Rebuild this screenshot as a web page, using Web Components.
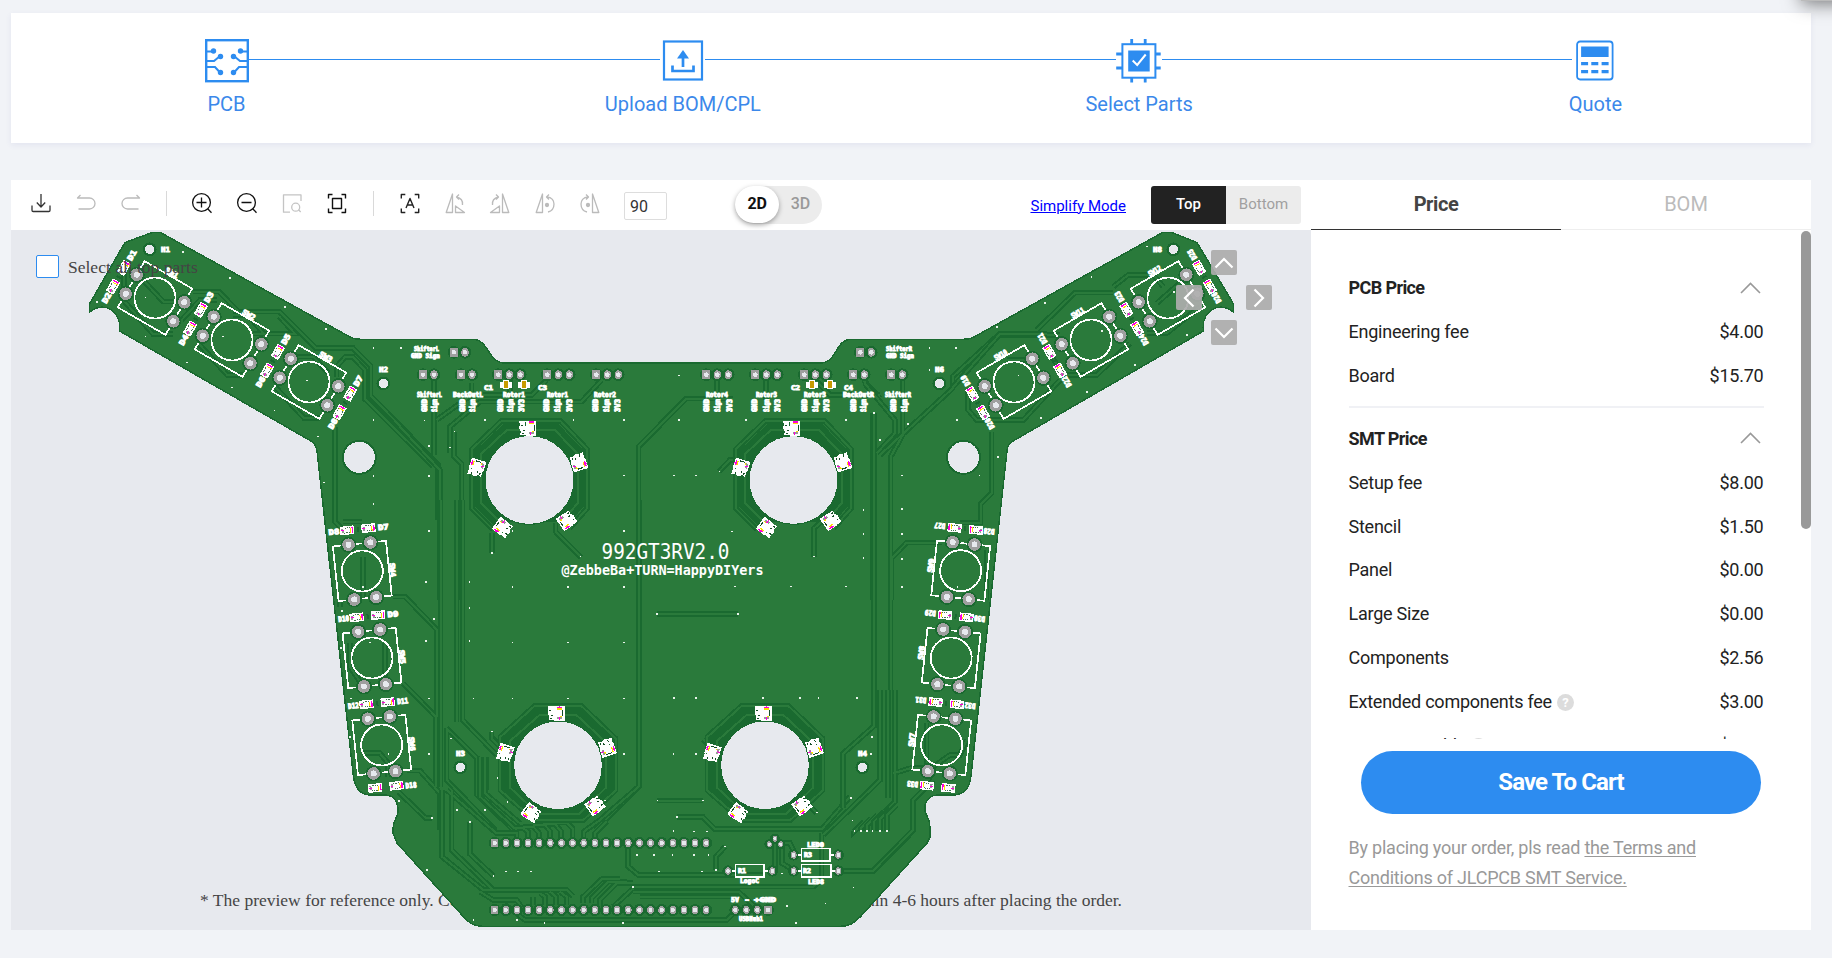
<!DOCTYPE html>
<html lang="en">
<head>
<meta charset="utf-8">
<title>PCB assembly order</title>
<style>
html,body{margin:0;padding:0;height:100%;overflow:hidden;background:#f1f3f7;font-family:Roboto,"Liberation Sans",sans-serif}
</style>
</head>
<body>
<order-page></order-page>
<script>
const define = (name, css, html, setup) => {
  const t = document.createElement('template');
  t.innerHTML = `<style>*{box-sizing:border-box}${css}</style>${html}`;
  customElements.define(name, class extends HTMLElement {
    constructor(){ super(); this.attachShadow({mode:'open'}).append(t.content.cloneNode(true)); }
    connectedCallback(){ if(setup) setup(this, this.shadowRoot); }
  });
};

/* ---------- progress steps ---------- */
const B = '#2d8cf0';
const stepIcons = {
  pcb:`<g fill="none" stroke="${B}" stroke-width="2.4"><rect x="1.2" y="1.2" width="41.6" height="41"/><path stroke-width="2" d="M2 12.500H7M2 22H9L14.500 17.500M2 28H10L15 33.500M42 12.500H37M42 22H35L29.500 17.500M42 28H34L29 33.500"/></g><g fill="${B}"><circle cx="8.500" cy="12" r="2.700"/><circle cx="15.500" cy="17.500" r="2.700"/><circle cx="15.500" cy="33.500" r="2.700"/><circle cx="35.500" cy="12" r="2.700"/><circle cx="28.500" cy="17.500" r="2.700"/><circle cx="28.500" cy="33.500" r="2.700"/></g>`,
  up:`<g fill="none" stroke="${B}"><rect x="3" y="2.500" width="38" height="38" stroke-width="2.200"/><path stroke-width="2.700" d="M11.500 26.500V32H32.500V26.500M22 28V17"/></g><path fill="${B}" d="M22 11L28 19.500H16Z"/>`,
  chip:`<g stroke="${B}" fill="none" transform="translate(-.8 0)"><rect x="6.200" y="5.200" width="33" height="33.500" stroke-width="2"/><path stroke-width="2.800" d="M15.500 0V6M29 0V6M15.500 38V43.500M29 38V43.500M0 15H6M0 29H6M39 15H44.500M39 29H44.500"/></g><g transform="translate(-.8 0)"><path fill="${B}" d="M12 11.500H33.500V32.500H12Z"/><path fill="none" stroke="#fff" stroke-width="2" d="M16.500 21.500L21 26L29.500 15.500"/></g>`,
  calc:`<g transform="translate(-.4 0)"><rect x="4.500" y="2.500" width="35.500" height="38" rx="3" fill="none" stroke="${B}" stroke-width="1.800"/><g fill="${B}"><path d="M8.500 7.500H36V18H8.500Z"/><path d="M8.500 23H15.500V26.200H8.500ZM18.700 23H25.700V26.200H18.700ZM29 23H36V26.200H29ZM8.500 31H15.500V34.200H8.500ZM18.700 31H25.700V34.200H18.700ZM29 31H36V34.200H29Z"/></g></g>`
};
define('step-item', `:host{display:flex;flex-direction:column;align-items:center;width:44px;flex:none}
svg{display:block;width:44px;height:44px;overflow:visible}.t{font-size:20px;line-height:24px;margin-top:9px;color:#3b88ea;white-space:nowrap}`,
`<svg viewBox="0 0 44 44"></svg><div class="t"><slot></slot></div>`,
(h,r)=>{r.querySelector('svg').innerHTML=stepIcons[h.getAttribute('icon')];});
define('step-bar', `:host{display:flex;width:1800px;height:130px;background:#fff;padding:25.500px 193.500px 0 193.500px;box-shadow:0 2px 6px rgba(60,60,150,.08)}
i{flex:1;height:1px;background:#2d8cf0;margin:20.500px 1px 0 .5px}`,
`<step-item icon="pcb">PCB</step-item><i></i><step-item icon="up">Upload BOM/CPL</step-item><i></i><step-item icon="chip">Select Parts</step-item><i></i><step-item icon="calc">Quote</step-item>`);

/* ---------- toolbar ---------- */
const glyphs = {
  down:`<path d="M10 1V14M5.800 9.500L10 14L14.200 9.500M1 12.500V17.300Q1 18.500 2.200 18.500H17.800Q19 18.500 19 17.300V12.500" stroke="#333"/>`,
  undo:`<path d="M4.500 2L1.500 5H13.500A5.500 5.500 0 0 1 13.500 16H2.500" stroke="#bbb"/>`,
  redo:`<path d="M15.500 2L18.500 5H6.500A5.500 5.500 0 0 0 6.500 16H17.500" stroke="#bbb"/>`,
  zin:`<circle cx="9.500" cy="9.500" r="8.900" stroke="#111"/><path d="M9.500 4.500V14.500M4.500 9.500H14.500M15.700 15.700L19.500 19.700" stroke="#111"/>`,
  zout:`<circle cx="9.500" cy="9.500" r="8.900" stroke="#111"/><path d="M4.500 9.500H14.500M15.700 15.700L19.500 19.700" stroke="#111"/>`,
  area:`<path d="M8 19.200H1.500V1.800H19V8M18.700 19L16.500 16.800" stroke="#c4c4c4"/><circle cx="13.700" cy="14.200" r="4" stroke="#c4c4c4"/>`,
  fit:`<path d="M1.500 5.500V1.500H5.500M14.500 1.500H18.500V5.500M18.500 15.500V19.500H14.500M5.500 19.500H1.500V15.500M5.500 5.500H14.500V15.500H5.500Z" stroke="#111" stroke-width="1.400"/>`,
  auto:`<path d="M1.300 5.500V1.500H5.300M14.700 1.500H18.700V5.500M18.700 15.500V19.500H14.700M5.300 19.500H1.300V15.500M6 15L10 5.500L14 15M7.300 12H12.700" stroke="#222" stroke-width="1.400"/>`,
  rl:`<path d="M7.500 1V19.500H1.200ZM10.500 13V19.500H19.500ZM17.500 12C18 8 16 5 11.500 4M14 1.500L11.500 4L14 6.500" stroke="#bbb"/>`,
  rr:`<path d="M12.500 1V19.500H18.800ZM9.500 13V19.500H.5ZM2.500 12C2 8 4 5 8.500 4M6 1.500L8.500 4L6 6.500" stroke="#bbb"/>`,
  ml:`<path d="M7.500 1V19.500H1.200ZM12 4C17 4 19 8 19 11C19 15 17 18 13 19M14 1.500L11.500 4L14 6.500" stroke="#bbb"/><circle cx="12" cy="12" r="1.500" fill="#bbb" stroke="#bbb"/>`,
  mr:`<path d="M12.500 1V19.500H18.800ZM8 4C3 4 1 8 1 11C1 15 3 18 7 19M6 1.500L8.500 4L6 6.500" stroke="#bbb"/><circle cx="8" cy="12" r="1.500" fill="#bbb" stroke="#bbb"/>`
};
define('tool-icon', `:host{display:block;width:20px;height:20px;flex:none}svg{display:block;overflow:visible}`,
`<svg width="20" height="20" viewBox="0 0 20 20" fill="none" stroke-width="1.300" stroke-linejoin="round"></svg>`,
(h,r)=>{r.querySelector('svg').innerHTML=glyphs[h.getAttribute('name')];});
define('tool-bar', `:host{display:flex;align-items:center;width:1300px;height:50px;background:#fff;position:relative}
.g{display:flex;gap:25px;padding-left:20px;align-items:center;margin-top:-4px}.g i{width:1px;height:25px;background:#d9d9d9}
.in{width:43px;height:28px;border:1px solid #ddd;border-radius:2px;font-size:16px;line-height:28px;padding-left:5px;color:#333;margin:1px 0 0 24px}
.tog{display:flex;width:87px;height:38px;border-radius:19px;background:#ececec;margin-left:68px;font-weight:500;font-size:16px;line-height:36px;color:#999}
.tog b{font-weight:700;letter-spacing:-.2px;width:44px;height:37px;border-radius:19px;background:#fff;color:#111;text-align:center;box-shadow:0 2px 5px rgba(0,0,0,.35)}.tog span{flex:1;text-align:center;padding-right:0}
a{margin-left:auto;color:#00f;text-decoration:underline;font-size:15px;margin-right:25px;padding-top:1px}
.sd{display:flex;width:150px;height:38px;border-radius:3px;overflow:hidden;margin-right:10px;font-size:15px;line-height:36px;text-align:center}
.sd b{font-weight:500;width:75px;background:#222;color:#fff}.sd span{width:75px;background:#ececec;color:#a0a0a0}`,
`<div class="g"><tool-icon name="down"></tool-icon><tool-icon name="undo"></tool-icon><tool-icon name="redo"></tool-icon><i></i><tool-icon name="zin"></tool-icon><tool-icon name="zout"></tool-icon><tool-icon name="area"></tool-icon><tool-icon name="fit"></tool-icon><i style="margin-left:1px"></i><tool-icon name="auto" style="margin-left:1px"></tool-icon><tool-icon name="rl"></tool-icon><tool-icon name="rr"></tool-icon><tool-icon name="ml"></tool-icon><tool-icon name="mr"></tool-icon></div>
<div class="in">90</div><div class="tog"><b>2D</b><span>3D</span></div><a>Simplify Mode</a><div class="sd"><b>Top</b><span>Bottom</span></div>`);

/* ---------- board drawing ---------- */
const G='#2a7a3b', D='#1a6a30', BG='#e7e9ee', PAD='#9f9f9f';
function boardSVG(){
  // Artwork is grouped in tiles drawn at three units per pixel; T places one tile.
  const T=(x,y,s)=>`<g transform="translate(${x} ${y}) scale(.33333)">${s}</g>`;
  const tr=a=>`<path class="c" d="${a.join('')}"/><path class="k" d="${a.join('')}"/>`;
  const dots=a=>{let d='';for(let i=0;i<a.length;i+=2)d+=`M${a[i]-2} ${a[i+1]}h5`;return `<path d="${d}" stroke="#e9f3ea" stroke-width="5" fill="none"/>`;};
  const txt=(x,y,s,w,z=6.5,extra='')=>`<text class="s" x="${x}" y="${y}" font-size="${z}" textLength="${w}" lengthAdjust="spacingAndGlyphs" ${extra}>${s}</text>`;
  const hole=(x,y,r,d=2)=>`<circle cx="${x}" cy="${y}" r="${r+d}" fill="${D}"/><circle cx="${x}" cy="${y}" r="${r}" fill="${BG}"/>`;
  let o='';
  const outline='M153 232.300H160L350 337Q354 339.300 360 339.300H472C490 339.300 487 363 505 363H820C838 363 834 339.300 852 339.300H964Q970 339.300 974 337L1163 232.300H1171L1197 242.500L1233.500 304V312C1218 300 1201 312 1203.500 331L1013 441Q1007.500 444 1007 451L971 776Q969 795 953 795H938C926 795 923 806 926 814C930 821 930 824 930 837L927 843L861 916Q852 926.300 841 926.300H482Q470 926.300 461 914L397 843L393 833C393 824 394 822 397 816C400 806 396 795 385 795H371Q356 795 353.500 777L317 451Q316 444 311 441L119.500 331C122 312 105 300 89.500 312V304L125 242.500Z';
  o+=`<path d="${outline}" fill="${G}" stroke="${D}" stroke-width="1.500"/>`;
  // copper
  o+=T(0,220,tr(['M580 215H657L715 275H838L948 385H1060L1112 437V527L1315 735V900','M760 341H885L838 290','M1005 620V900','M1302 465V705','M1010 470V440L1035 412H1060L1095 450V537L1300 740','M370 240L460 343H520','M595 370L682 465H730','M825 500L912 594H960','M415 165L490 245H545','M700 285H745L790 340','M860 410H940L985 460','M545 300L600 240H650','M372 150V235']));
  o+=T(400,320,tr(['M0 320L120 450V840','M163 335V410L185 432V840','M102 175V400','M215 190V225L110 300','M250 226H395L440 180','M150 400V320L240 245H545L605 180','M716 1110V380L858 236H1000','M951 175V225','M1098 175V240','M276 700V640','M467 610V635L543 712','M957 455L990 420H1020','M1242 710V625L1270 600','M1420 280V840','M330 180V215','M1246 180L1290 225H1440','M1390 180L1440 235']));
  o+=T(860,320,tr(['M42 280V1110','M128 165V345L92 410V1110','M14 190L105 300V340L50 400','M60 405L278 205V170L415 45H600','M395 335V520L362 552V608H300','M245 668H140L95 715V840','M325 210V270L350 300H490L600 180','M440 120H500','M380 690V840']));
  o+=T(900,220,tr(['M160 500L300 342H440','M410 330L525 218H640','M640 200L685 165H760L790 200','M770 250H770L850 180','M500 465H590L690 370','M740 340H800L900 260','M450 400L490 465']));
  o+=T(300,500,tr(['M105 0V65L135 95','M280 290H315L410 388V650','M310 550L408 650V860','M320 812H360L420 880V990','M422 0V860','M470 0V665','M488 0V660L590 765','M575 695V712L605 740','M440 685L532 775V885L640 990','M440 685V840L585 990','M295 875L378 955H395','M1018 0V860L885 990','M1070 343H1315','M120 305V320M190 170V290','M150 430V500L180 545','M255 430V550','M190 760H240L265 790V830','M130 65H185','M545 770V880L660 985','M560 770V870']));
  o+=T(400,690,tr(['M770 332H910','M830 382H910L945 418H1265L1350 320','M1265 430V570L1240 590H700','M210 395V492L280 558','M126 300V500L250 600H500L520 620','M155 300V480L280 600','M140 300L290 430H320','M240 200V320L350 420','M255 200V310L360 400','M685 470V530L715 555H1090','M550 640V620L605 568H660M575 640V625L625 575H680M600 650V630L650 580H700','M310 640L375 690H980L1005 665','M240 605L280 630H350L370 660','M700 605H1015L1070 655','M720 620H1020','M700 595L640 650','M975 470L948 500V540','M1125 460V545','M1147 465V520L1180 540','M1145 460H1170L1185 490','M1320 543H1420L1530 435','M350 450V430H320M384 450V425L370 415H340M418 450V430L400 410H370M451 450V425L435 405H400M484 450V425L465 402H430M518 450V415L500 398H460','M551 450V425L600 390L716 290V0','M585 450V430L620 395','M400 645V620M435 645V620L420 610M468 645V620L450 605M500 645V620L480 605','M600 332H620','M1220 340L1250 368','M275 125V145L300 170','M910 148L930 170']));
  o+=T(680,690,tr(['M478 543H578L700 420V330L760 270','M582 0V108L490 190V355','M600 0V270L430 435','M625 0V325M645 0V335L615 365','M640 250L690 235H740','M740 100V240','M760 230L810 195H840L860 150']));
  o+=T(680,690,[0,1,2,3,4,5].map(i=>`<path class="c" d="M${523+i*19.5} 423V${425-i*10}l30-30"/><path class="k" d="M${523+i*19.5} 423V${425-i*10}l30-30"/>`).join(''));
  // LED rings around the rotary cut-outs
  const led=(x,y,a)=>`<g transform="translate(${x} ${y}) rotate(${a})"><path d="M-5-7.500H5.500V7.500H-5ZM-11.500-7h7l-1 3 1 3v8h-6l1-3-2-4 1-3z" fill="#fff"/><path d="M-2-6H3M.5-7.500V-4" stroke="#f0d" stroke-width="1.300"/><path d="M-2-4.300H3M1 3.500H3" stroke="#fd0" stroke-width="1.200"/><path d="M-2 5H3" stroke="#999" stroke-width="2"/><path d="M0 4V7" stroke="#f0d"/><path d="M3.500-3V3M-10-3h2M-8 2h2M-9 5h2" stroke="#174f27" stroke-width="1"/></g>`;
  const ring=(x,y,closed)=>{
    const p=closed?'M-70 165L-173 75V-85L-70-178H70L173-80V75L75 165Z':'M-110 148L-173 85V-92L-83-178H92L173-92V85L120 145';
    const q=closed?'M-58 147L-145 66V-72L-56-150H56L145-68V66L62 147Z':'M-90 125L-145 70V-78L-68-150H76L145-78V70L95 125';
    return T(x,y,`<path d="${p}" fill="${closed?D:'none'}" stroke="${D}" stroke-width="17"/><path d="${q}" fill="${D}" stroke="${D}" stroke-width="40"/><path d="${p}" class="k"/><path d="${q}" class="k"/>`)+`<circle cx="${x}" cy="${y}" r="44.300" fill="${BG}" stroke="${D}" stroke-width="1"/>`
    +led(x+1,y-52,0)+led(x+50,y-15,72)+led(x+35,y+42,145)+led(x-29,y+46,216)+led(x-52,y-15,-72);
  };
  o+=ring(529.500,480)+ring(793.500,480)+ring(558,765.300,1)+ring(765,765.300,1);
  // push switches with their two LEDs
  const part=(x,y)=>`<g transform="translate(${x} ${y})"><path d="M-4.300-7H4.300V7H-4.300Z" fill="#fff"/><path d="M-3-5.500H3" stroke="#f0d" stroke-width="1.500"/><path d="M-2-3.500H3" stroke="#fd0"/><path d="M-2.500-3V3M2.500-3V3" stroke="#174f27" stroke-width=".8" stroke-dasharray="1 .8"/><path d="M-2 4.500H2" stroke="#999" stroke-width="2"/><path d="M0 3V6" stroke="#f0d"/></g>`;
  const lab=(x,y,n)=>txt(-5.500,2.700,'D'+n,11,7.5,`transform="translate(${x} ${y}) rotate(-90)"`);
  const pair=(x,n)=>part(x,-10.500)+part(x,11)+lab(x+.5,-25.5,n)+lab(x,24,n+1)+`<path d="M${x}-1V1" stroke="${D}" stroke-width="5"/>`;
  const sw=(x,y,a,n,extra='',m=pair(-42,2*n-1))=>{
    let s=`<g transform="translate(${x} ${y}) rotate(${a})"><rect x="-27.500" y="-26.700" width="55" height="53.400" fill="none" stroke="#fff" stroke-width="1.700"/><circle r="20.500" fill="none" stroke="#fff" stroke-width="1.800"/>`;
    for(const [px,py] of [[-27.5,-11],[-27.5,11],[27.5,-11],[27.5,11]]) s+=`<circle cx="${px}" cy="${py}" r="8" fill="${D}"/><circle cx="${px}" cy="${py}" r="6.300" fill="${PAD}"/><circle cx="${px}" cy="${py}" r="3" fill="${BG}"/>`;
    return s+m+extra+txt(-5,-27.5,'SW'+n,14,7.5)+`</g>`;
  };
  o+=sw(155,298,30,1)+sw(232,340,30,2)+sw(309,382,30,3,pair(41.5,7));
  o+=sw(362.3,571,84,4)+sw(372,658,84,5)+sw(381.7,745,84,6,part(42,-10.5)+part(42,11)+lab(43,-25,18));
  o+=sw(1168,298,-30,12,pair(42,25))+sw(1091,340,-30,11)+sw(1014,382,-30,10);
  const rsw=(x,y,n,d,e='')=>sw(x,y,-84,n,e,pair(42,d));
  o+=rsw(960.7,570.7,9,27)+rsw(951.2,658,8,29)+rsw(941.7,745,7,31,part(-42,-10.5)+part(-42,11)+lab(-42,-25,33));
  // mounting holes
  o+=hole(359.3,457.3,15.5,2)+hole(963.5,457.3,15.5,2);
  for(const [x,y] of [[149.7,249.3],[383.3,383.5],[1173.3,249.3],[939.4,383.5],[460.3,767.3],[862.3,767.3]]) o+=hole(x,y,4.7,2.2);
  o+=txt(161,251.5,'H1',9,7)+txt(379,371.8,'H2',9,7)+txt(1153,251.5,'H8',9,7)+txt(935,371.8,'H6',9,7)+txt(456,755.5,'H3',9,7)+txt(858,755.5,'H4',9,7);
  // through-hole headers
  const pad=(x,y,sq,r=12)=>`<circle cx="${x}" cy="${y}" r="${r+7}" fill="${D}"/>`+(sq?`<rect x="${x-r}" y="${y-r-1}" width="${2*r}" height="${2*r+2}" fill="${PAD}"/>`:`<ellipse cx="${x}" cy="${y}" rx="${r-1}" ry="${r+1}" fill="${PAD}"/>`)+`<circle cx="${x}" cy="${y}" r="${r*.58}" fill="${BG}"/>`;
  let h='';
  for(const g of [[69,102],[183,216],[295,328,361],[442,475,508],[589,622,655],[919,952,985],[1066,1099,1132],[1213,1246,1279],[1360,1393],[1474,1507]]) g.forEach((x,i)=>h+=pad(x,164,!i));
  h+=pad(162,97,1)+pad(195,97)+pad(1381,97,1)+pad(1414,97);
  for(const x of [318,372,1236,1290]) h+=`<rect x="${x-17}" y="185" width="34" height="18" fill="#fff"/><rect x="${x-8}" y="182" width="16" height="24" fill="#c79a00" stroke="#fff" stroke-width="3"/>`;
  o+=T(400,320,h);
  h='';
  for(let i=0;i<20;i++) h+=pad(284+i*33.4,459,!i,11)+pad(284+i*33.4,660,!i,11);
  for(const x of [1006,1039,1072,1104]) h+=pad(x,660,x==1104,11);
  for(const [x,y] of [[984,543],[1117,543],[1181,495],[1315,495],[1181,543],[1315,543]]) h+=pad(x,y,0,10);
  for(const [x,y] of [[1108,463],[1125,446],[1142,463]]) h+=pad(x,y,0,8);
  h+='<path d="M1007 524H1092V562H1007ZM996 543h10M1094 543h10M1205 476H1291V514H1205ZM1193 495h12M1291 495h12M1205 524H1294V562H1205ZM1193 543h12M1294 543h10" fill="none" stroke="#fff" stroke-width="5"/>';
  o+=T(400,690,h);
  o+=txt(738,873.3,'R1',8,6.5)+txt(804,857.3,'R3',8,6.5)+txt(803,873.3,'R2',8,6.5)+txt(740,883,'LogoC',19)+txt(807,846.500,'LED0',17)+txt(808,884.300,'LED8',16)+txt(731,901.500,'5V',8)+txt(744,901.500,'-',6)+txt(754,901.500,'+GND',22)+txt(739,921.300,'USBHub1',24);
  o+=T(0,220,dots([548,97,690,175,854,262,977,327,1120,384,1203,384,560,428,695,503,823,572,953,650,1120,600,1120,768,1120,852,1287,678,1287,768,972,788,436,350,436,233,669,350,921,482,1273,602,291,247]));
  o+=T(400,320,dots([163,335,87,378,87,467,87,633,337,633,671,300,671,467,671,633,822,467,888,467,996,635,837,300,1038,300,1338,300,254,300,520,300,78,787,208,786,337,800,504,800,671,800,1005,800,1172,800,1338,800,837,167,1390,570,1390,642,1390,714,73,302,150,383,276,700,541,710,958,455,1242,710]));
  o+=T(860,320,dots([208,84,208,150,288,84,291,300,143,312,125,467,125,568,125,642,125,717,125,801,414,412,358,467,543,294,681,217,825,136,411,22,10,570,10,642,10,714,42,280,60,360,475,167,725,34,292,801]));
  o+=T(900,220,dots([574,171,434,249,291,323,740,80,860,345,705,436,822,216]));
  o+=T(300,500,dots([387,94,378,247,508,245,637,261,804,261,971,261,508,325,378,424,508,424,637,428,804,428,971,428,387,596,520,596,637,596,804,596,971,596,387,762,452,716,971,762,470,930,555,930,622,906,592,835,402,358,575,695,510,966,395,955,1070,343,1313,343,297,903,188,261,210,428,265,762,125,334,153,596,123,445,150,711]));
  o+=T(400,690,dots([822,25,888,25,1088,25,1200,25,1255,25,1370,25,820,192,888,192,820,423,882,425,920,425,710,495,762,495,817,495,882,495,925,495,776,545,906,545,318,545,354,545,393,545,668,700,433,700,1188,700,220,690,350,690,1276,641,1360,593,1357,392,1353,325,80,540,210,395,280,558,772,332,909,332,830,382,1250,368,615,332,698,592,975,470,947,540,1146,551,1415,141,1413,192,1363,423,1382,423,1400,423,1417,423,1439,423,1460,423,1160,648]));
  // silkscreen lettering
  o+=txt(414,350.500,'ShifterL',25)+txt(411,357.700,'GND Sign',29)+txt(886,350.500,'ShifterR',26)+txt(886,357.700,'GND Sign',28);
  for(const [x,s,w,pins] of [[417,'ShifterL',25,[424,434]],[453,'BackOutL',30,[462,472]],[503,'Rotor1',22,[500,510,521]],[547,'Rotor1',21,[546,557,569]],[594,'Rotor2',22,[595,606,617]],[706,'Rotor4',22,[706,717,729]],[756,'Rotor3',21,[754,766,777]],[804,'Rotor3',22,[804,815,826]],[843,'BackOutR',31,[853,863]],[885,'ShifterR',26,[893,904]]]){
    o+=txt(x,396.700,s,w,7);
    pins.forEach((p,i)=>o+=txt(-13,2.500,['GND','Sign','3V3'][i],13,7.5,`transform="translate(${p} 399) rotate(-90)"`));
  }
  o+=txt(484,389.500,'C1',9)+txt(538,389.500,'C3',9)+txt(791,389.500,'C2',9)+txt(844,389.500,'C4',9);
  o+=`<text class="m" x="601.500" y="558.700" font-size="20.500" textLength="128" lengthAdjust="spacingAndGlyphs">992GT3RV2.0</text><text class="m" x="561.500" y="574.800" font-size="14" font-weight="700" textLength="202" lengthAdjust="spacingAndGlyphs">@ZebbeBa+TURN=HappyDIYers</text>`;
  return o;
}
define('pcb-board', `:host{display:block;width:1300px;height:700px}svg{display:block}
.c{fill:none;stroke:${D};stroke-width:17}.k{fill:none;stroke:${G};stroke-width:6}
.s{fill:#fff;stroke:#fff;stroke-width:.95px;font-weight:700}text{font-family:"DejaVu Sans Mono",monospace}.m{fill:#fff}`,
`<svg width="1300" height="700" viewBox="11 230 1300 700" shape-rendering="crispEdges"></svg>`,
(h,r)=>{r.querySelector('svg').innerHTML=boardSVG();});

define('pan-button', `:host{display:flex;width:26px;height:25px;border-radius:2px;background:rgba(172,172,172,.93);align-items:center;justify-content:center}
svg{transform:rotate(var(--r,0deg))}`,
`<svg width="20" height="12" viewBox="0 0 20 12" fill="none" stroke="#fff" stroke-width="2.200"><path d="M1.500 10.500L10 2L18.500 10.500"/></svg>`);
define('pan-pad', `:host{display:grid;grid-template-columns:26px 26px 26px;grid-template-rows:25px 25px 25px;gap:10px 9px}
.u{grid-area:1/2}.l{grid-area:2/1;--r:-90deg}.r{grid-area:2/3;--r:90deg}.d{grid-area:3/2;--r:180deg}`,
`<pan-button class="u"></pan-button><pan-button class="l"></pan-button><pan-button class="r"></pan-button><pan-button class="d"></pan-button>`);
define('board-view', `:host{display:block;position:relative;width:1300px;height:700px;background:#e7e9ee;overflow:hidden;font-family:"Liberation Serif",serif;font-size:17.500px;color:#444}
pcb-board{position:absolute;left:0;top:0}.note{position:absolute;left:189px;width:922px;top:659px;display:flex;justify-content:space-between;line-height:22px;white-space:nowrap}
.all{position:absolute;left:25px;top:25px;display:flex;align-items:center;gap:9px}.all i{width:23px;height:23px;background:#fff;border:1px solid #2d8cf0;border-radius:2px}.all span{padding-top:2px}
pan-pad{position:absolute;left:1165px;top:20px}`,
`<div class="note"><span>* The preview for reference only. Component placement</span><span>within 4-6 hours after placing the order.</span></div><pcb-board></pcb-board><div class="all"><i></i><span>Select all top parts</span></div><pan-pad></pan-pad>`);

/* ---------- price panel ---------- */
define('price-row', `:host{display:flex;justify-content:space-between;align-items:center;height:43.850px;font-size:18px;letter-spacing:-.24px;color:#222}span{display:flex;align-items:center}`,
`<span><slot></slot></span><slot name="v"></slot>`);
define('price-head', `:host{display:flex;justify-content:space-between;align-items:center;height:43.850px;font-size:18px;font-weight:700;letter-spacing:-.6px;color:#222}svg{margin-right:3px}`,
`<slot></slot><svg width="21" height="12" viewBox="0 0 21 12" fill="none" stroke="#999" stroke-width="1.600"><path d="M1 11L10.500 1.500L20 11"/></svg>`);
define('help-dot', `:host{display:flex;width:17px;height:17px;border-radius:50%;background:#dcdcdc;color:#fff;font-size:13px;font-weight:700;align-items:center;justify-content:center;margin:2px 0 0 5px}`,`?`);
define('price-panel', `:host{display:flex;flex-direction:column;width:500px;height:750px;background:#fff;position:relative}
.tabs{display:flex;height:50px;border-bottom:1px solid #eee;font-size:20px;line-height:49px;text-align:center;flex:none}.tabs b{width:250px;height:50px;border-bottom:1px solid #333;font-weight:700;letter-spacing:-.4px;color:#444}.tabs span{width:250px;color:#bbb}
.list{height:509px;overflow:hidden;padding:36px 47.500px 0 37.500px;flex:none}hr{border:0;height:2px;background:#f0f1f5;margin:8px 0 9px}
.bar{position:absolute;right:0;top:51px;width:10px;height:298px;border-radius:5px;background:#999}
.btn{margin:12px 50px 0;height:63px;border-radius:32px;background:#2d8cf0;color:#fff;font-size:24px;font-weight:700;letter-spacing:-.9px;line-height:62px;text-align:center;flex:none}
p{margin:19px 38px 0 37.500px;font-size:18px;line-height:30px;letter-spacing:-.22px;color:#999}u{text-underline-offset:2px;text-decoration-thickness:1px}`,
`<div class="tabs"><b>Price</b><span>BOM</span></div><div class="list">
<price-head>PCB Price</price-head><price-row>Engineering fee<span slot="v">$4.00</span></price-row><price-row>Board<span slot="v">$15.70</span></price-row><hr>
<price-head>SMT Price</price-head><price-row>Setup fee<span slot="v">$8.00</span></price-row><price-row>Stencil<span slot="v">$1.50</span></price-row><price-row>Panel<span slot="v">$0.00</span></price-row><price-row>Large Size<span slot="v">$0.00</span></price-row><price-row>Components<span slot="v">$2.56</span></price-row><price-row>Extended components fee<help-dot></help-dot><span slot="v">$3.00</span></price-row><price-row>SMT Assembly<help-dot></help-dot><span slot="v">$0.62</span></price-row></div>
<div class="bar"></div><div class="btn">Save To Cart</div><p>By placing your order, pls read <u>the Terms and Conditions of JLCPCB SMT Service.</u></p>`);

define('order-page', `:host{display:flex;flex-direction:column;gap:37px;padding:13px 0 0 11px;width:1832px;height:958px;overflow:hidden;position:relative}
main{display:flex;width:1800px;height:750px}.corner{position:absolute;left:1801px;top:-40px;width:60px;height:41px;background:#bbb;box-shadow:0 3px 18px rgba(0,0,0,.5)}`,
`<step-bar></step-bar><main><section><tool-bar></tool-bar><board-view></board-view></section><price-panel></price-panel></main><div class="corner"></div>`);
</script>
</body>
</html>
